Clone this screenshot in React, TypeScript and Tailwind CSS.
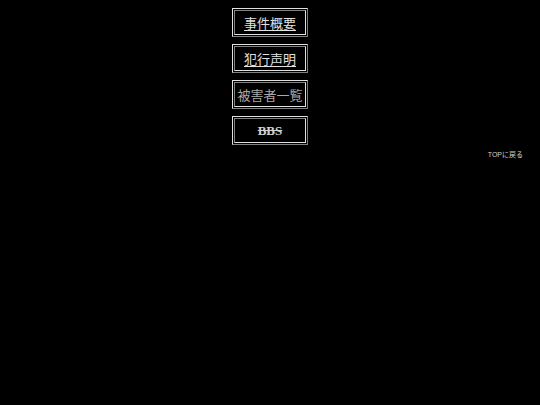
const items = [
  { label: "事件概要", kind: "link" },
  { label: "犯行声明", kind: "link" },
  { label: "被害者一覧", kind: "plain" },
  { label: "BBS", kind: "strike" },
];

function MenuBox({ label, kind }: { label: string; kind: string }) {
  return (
    <div className="w-[76px] h-[29px] p-px border border-t-[#e0e0e0] border-l-[#e0e0e0] border-r-[#808080] border-b-[#808080]">
      <div className="h-full w-full flex items-center justify-center border border-t-[#808080] border-l-[#808080] border-r-[#e0e0e0] border-b-[#e0e0e0]">
        {kind === "link" && (
          <a className="text-[13px] leading-none text-[#e0e0e0] underline underline-offset-2 font-['Noto_Sans_CJK_JP',sans-serif]">
            {label}
          </a>
        )}
        {kind === "plain" && (
          <span className="text-[13px] leading-none text-[#a8a8a8] font-['Noto_Sans_CJK_JP',sans-serif]">
            {label}
          </span>
        )}
        {kind === "strike" && (
          <span className="text-[13px] leading-none font-bold text-[#d0d0d0] line-through font-['Liberation_Serif',serif]">
            {label}
          </span>
        )}
      </div>
    </div>
  );
}

export default function App() {
  return (
    <div className="w-[540px] h-[405px] bg-black overflow-hidden">
      <div className="flex flex-col items-center gap-[7px] pt-2">
        {items.map((it) => (
          <MenuBox key={it.label} label={it.label} kind={it.kind} />
        ))}
      </div>
      <div className="flex justify-end pr-[17px] pt-[6px]">
        <span className="text-[7px] leading-none text-[#d0d0d0] font-['Liberation_Sans','Noto_Sans_CJK_JP',sans-serif]">
          TOPに戻る
        </span>
      </div>
    </div>
  );
}
